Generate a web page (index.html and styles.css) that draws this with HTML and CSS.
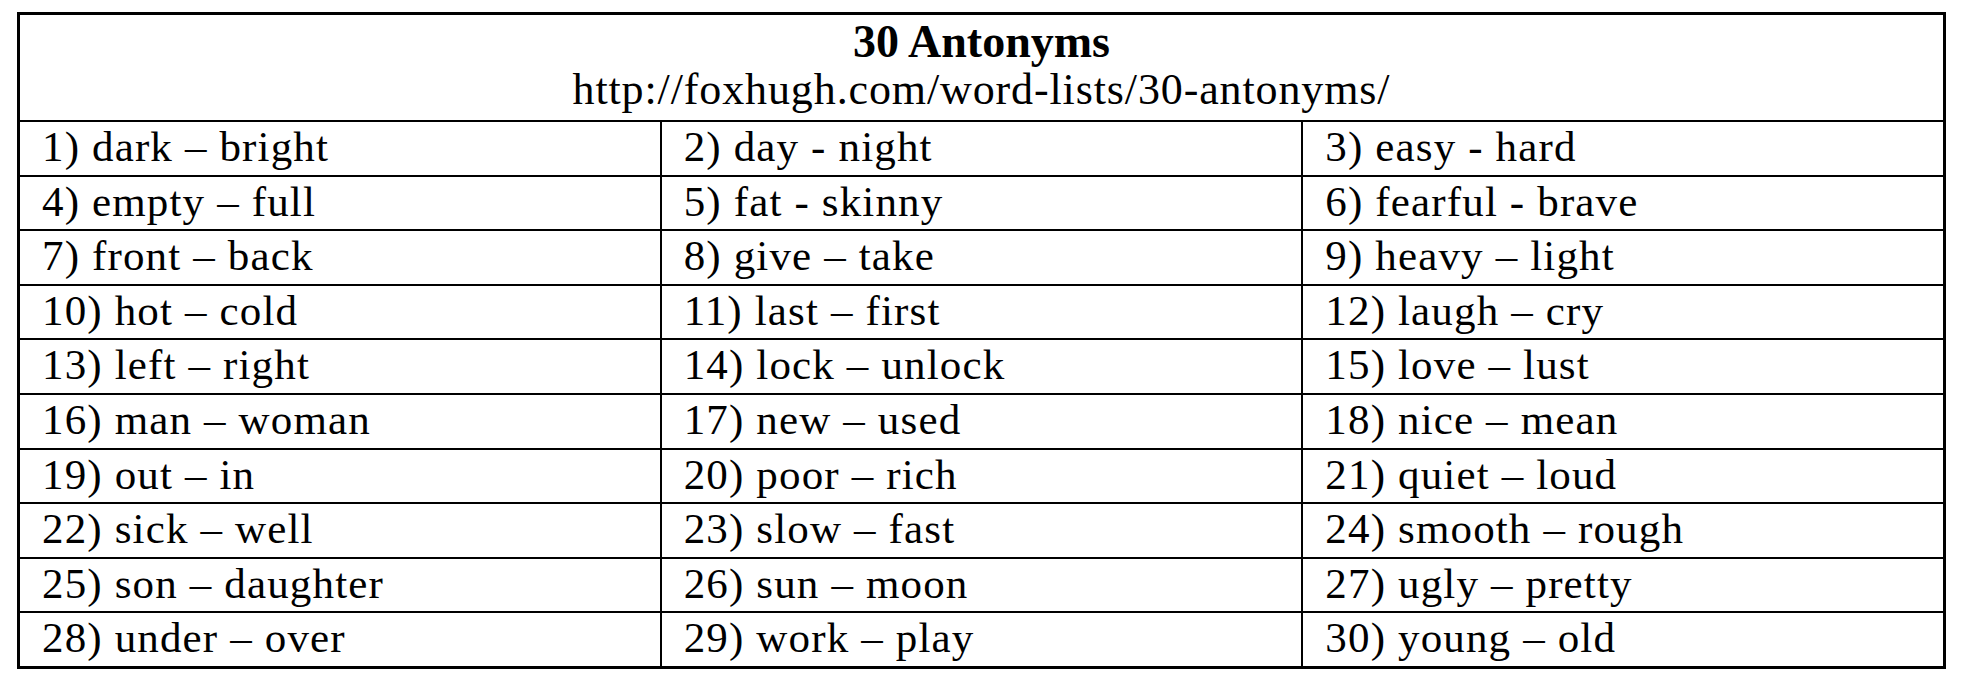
FILE: index.html
```html
<!DOCTYPE html>
<html lang="en">
<head>
<meta charset="utf-8">
<title>30 Antonyms</title>
<link rel="stylesheet" href="styles.css">
</head>
<body>
<div class="sheet">
  <div class="head">
    <div class="title">30 Antonyms</div>
    <div class="url">http://foxhugh.com/word-lists/30-antonyms/</div>
  </div>
  <div class="cell">1) dark – bright</div>
  <div class="cell">2) day - night</div>
  <div class="cell">3) easy - hard</div>
  <div class="cell">4) empty – full</div>
  <div class="cell">5) fat - skinny</div>
  <div class="cell">6) fearful - brave</div>
  <div class="cell">7) front – back</div>
  <div class="cell">8) give – take</div>
  <div class="cell">9) heavy – light</div>
  <div class="cell">10) hot – cold</div>
  <div class="cell">11) last – first</div>
  <div class="cell">12) laugh – cry</div>
  <div class="cell">13) left – right</div>
  <div class="cell">14) lock – unlock</div>
  <div class="cell">15) love – lust</div>
  <div class="cell">16) man – woman</div>
  <div class="cell">17) new – used</div>
  <div class="cell">18) nice – mean</div>
  <div class="cell">19) out – in</div>
  <div class="cell">20) poor – rich</div>
  <div class="cell">21) quiet – loud</div>
  <div class="cell">22) sick – well</div>
  <div class="cell">23) slow – fast</div>
  <div class="cell">24) smooth – rough</div>
  <div class="cell">25) son – daughter</div>
  <div class="cell">26) sun – moon</div>
  <div class="cell">27) ugly – pretty</div>
  <div class="cell">28) under – over</div>
  <div class="cell">29) work – play</div>
  <div class="cell">30) young – old</div>
</div>
</body>
</html>
```
FILE: styles.css
```css
html, body {
  margin: 0;
  padding: 0;
  background: #ffffff;
}

body {
  padding: 12px 0 0 17px;
  font-family: "Liberation Serif", "Times New Roman", serif;
  color: #000000;
}

.sheet {
  width: 1929px;
  box-sizing: border-box;
  border: 3px solid #000000;
  background: #000000;
  display: grid;
  grid-template-columns: 1fr 1fr 1fr;
  grid-template-rows: 105px repeat(10, 52.6px);
  gap: 2px;
}

.head {
  grid-column: 1 / -1;
  background: #ffffff;
  text-align: center;
  padding-top: 2.5px;
}

.title {
  font-size: 46px;
  font-weight: bold;
  line-height: 48px;
}

.url {
  font-size: 44px;
  line-height: 48px;
  letter-spacing: 0.88px;
}

.cell {
  background: #ffffff;
  font-size: 43px;
  line-height: 49px;
  letter-spacing: 1.15px;
  padding-left: 22px;
  white-space: nowrap;
}
```
